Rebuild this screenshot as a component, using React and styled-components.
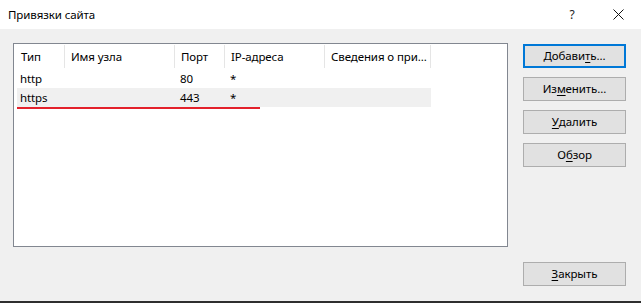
import styled, { createGlobalStyle } from 'styled-components'

const GlobalStyle = createGlobalStyle`
    html, body {
        margin: 0;
        padding: 0;
        background: #f0f0f0;
    }
    body {
        font-family: "Noto Sans", "Liberation Sans", sans-serif;
        font-size: 11.5px;
        letter-spacing: -0.1px;
        color: #000;
    }
`

const Window = styled.div`
    width: 641px;
    height: 303px;
    display: flex;
    flex-direction: column;
    overflow: hidden;
`
const TitleBar = styled.header`
    height: 29px;
    flex-shrink: 0;
    background: #fff;
    display: flex;
    align-items: center;
    padding-left: 8px;
`
const Title = styled.span`
    flex: 1;
    padding-bottom: 1px;
`
const TitleButton = styled.div`
    width: 46px;
    height: 29px;
    display: flex;
    align-items: center;
    justify-content: center;
    font-size: 12px;
    color: #222;
`
const Body = styled.main`
    flex: 1;
    background: #f0f0f0;
    display: flex;
    flex-direction: column;
    padding: 14px 15px 0 13px;
`
const MainRow = styled.div`
    display: flex;
    gap: 15px;
`
const ListBox = styled.div`
    width: 496px;
    height: 204px;
    box-sizing: border-box;
    border: 1px solid #828790;
    background: #fff;
`
const Header = styled.div`
    display: grid;
    grid-template-columns: 51px 110px 50px 100px 106px;
    height: 25px;
`
const HeaderCell = styled.div`
    display: flex;
    align-items: center;
    padding-left: ${(p) => (p.$first ? 7 : 6)}px;
    border-right: 1px solid #e5e5e5;
    margin: 1px 0;
    white-space: nowrap;
`
const Row = styled.div`
    display: grid;
    grid-template-columns: 47px 110px 50px 100px 107px;
    height: 19px;
    margin-left: 3px;
    width: 414px;
    background: ${(p) => (p.$selected ? '#f0f0f0' : 'transparent')};
    position: relative;
`
const Cell = styled.div`
    display: flex;
    align-items: center;
    padding-left: ${(p) => (p.$first ? 3 : 6)}px;
    white-space: nowrap;
`
const Mark = styled.div`
    position: absolute;
    left: 0;
    top: 19px;
    width: 243px;
    height: 2px;
    background: #e3212b;
`
const ButtonColumn = styled.div`
    display: flex;
    flex-direction: column;
    gap: 9px;
    padding-top: 1px;
`
const Button = styled.button`
    width: 103px;
    height: 24px;
    box-sizing: border-box;
    margin: 0;
    padding: 0 0 1px;
    background: #e1e1e1;
    border: ${(p) => (p.$focused ? '2px solid #0078d7' : '1px solid #adadad')};
    font-family: inherit;
    font-size: inherit;
    letter-spacing: inherit;
    color: #000;
    display: flex;
    align-items: center;
    justify-content: center;
`
const Footer = styled.div`
    display: flex;
    justify-content: flex-end;
    padding-top: 15px;
`
const Key = styled.u`
    text-underline-offset: 2px;
`
const Desktop = styled.div`
    height: 2px;
    flex-shrink: 0;
    background: #2e2e2e;
`

const columns = ['Тип', 'Имя узла', 'Порт', 'IP-адреса', 'Сведения о при...']
const bindings = [
    { type: 'http', host: '', port: '80', ip: '*', info: '' },
    { type: 'https', host: '', port: '443', ip: '*', info: '', selected: true },
]

function CloseIcon() {
    return (
        <svg width="11" height="11" viewBox="0 0 11 11">
            <path d="M0.5 0.5 L10.5 10.5 M10.5 0.5 L0.5 10.5" stroke="#111" strokeWidth="1" />
        </svg>
    )
}

export default function App() {
    return (
        <Window>
            <GlobalStyle />
            <TitleBar>
                <Title>Привязки сайта</Title>
                <TitleButton>?</TitleButton>
                <TitleButton>
                    <CloseIcon />
                </TitleButton>
            </TitleBar>
            <Body>
                <MainRow>
                    <ListBox>
                        <Header>
                            {columns.map((c, i) => (
                                <HeaderCell key={c} $first={i === 0}>
                                    {c}
                                </HeaderCell>
                            ))}
                        </Header>
                        {bindings.map((b) => (
                            <Row key={b.type} $selected={b.selected}>
                                <Cell $first>{b.type}</Cell>
                                <Cell>{b.host}</Cell>
                                <Cell>{b.port}</Cell>
                                <Cell>{b.ip}</Cell>
                                <Cell>{b.info}</Cell>
                                {b.selected && <Mark />}
                            </Row>
                        ))}
                    </ListBox>
                    <ButtonColumn>
                        <Button $focused>
                            Добави<Key>т</Key>ь...
                        </Button>
                        <Button>
                            Из<Key>м</Key>енить...
                        </Button>
                        <Button>
                            <Key>У</Key>далить
                        </Button>
                        <Button>
                            О<Key>б</Key>зор
                        </Button>
                    </ButtonColumn>
                </MainRow>
                <Footer>
                    <Button>
                        <Key>З</Key>акрыть
                    </Button>
                </Footer>
            </Body>
            <Desktop />
        </Window>
    )
}
